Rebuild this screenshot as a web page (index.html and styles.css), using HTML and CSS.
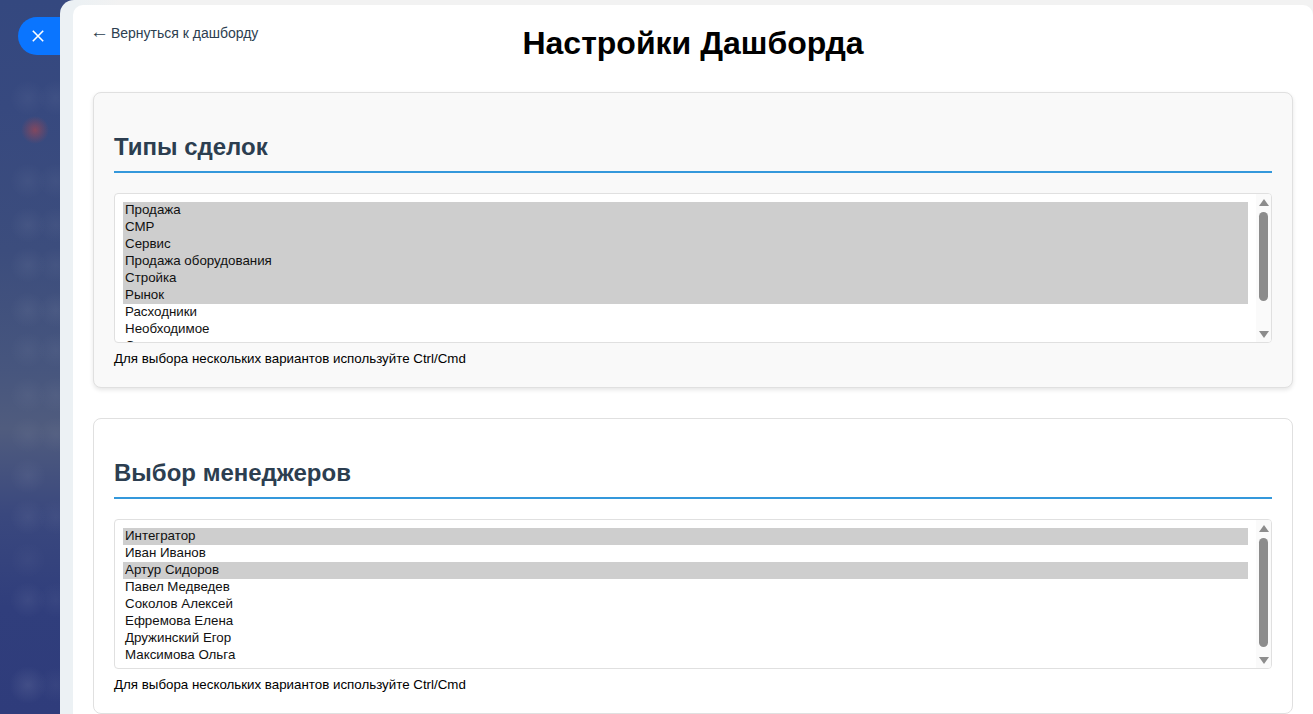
FILE: index.html
```html
<!DOCTYPE html>
<html lang="ru">
<head>
<meta charset="utf-8">
<title>Настройки Дашборда</title>
<link rel="stylesheet" href="styles.css">
</head>
<body>
<div class="app">
  <aside class="rail">
    <button class="close" aria-label="Закрыть">
      <svg width="14" height="14" viewBox="0 0 14 14"><path d="M1.8 1.8 12.2 12.2M12.2 1.8 1.8 12.2" stroke="#fff" stroke-width="1.6" fill="none"/></svg>
    </button>
  </aside>
  <div class="sheet">
    <main class="main">
      <header class="head">
        <a class="back" href="#"><span class="arrow">←</span> Вернуться к дашборду</a>
        <h1>Настройки Дашборда</h1>
      </header>
      <section class="card grey">
        <h2>Типы сделок</h2>
        <div class="listbox">
          <ul class="opts">
            <li class="sel">Продажа</li>
            <li class="sel">СМР</li>
            <li class="sel">Сервис</li>
            <li class="sel">Продажа оборудования</li>
            <li class="sel">Стройка</li>
            <li class="sel">Рынок</li>
            <li>Расходники</li>
            <li>Необходимое</li>
            <li>Согласование</li>
          </ul>
          <div class="bar"><i class="up"></i><b class="thumb t1"></b><i class="down"></i></div>
        </div>
        <p class="hint">Для выбора нескольких вариантов используйте Ctrl/Cmd</p>
      </section>
      <section class="card">
        <h2>Выбор менеджеров</h2>
        <div class="listbox">
          <ul class="opts">
            <li class="sel">Интегратор</li>
            <li>Иван Иванов</li>
            <li class="sel">Артур Сидоров</li>
            <li>Павел Медведев</li>
            <li>Соколов Алексей</li>
            <li>Ефремова Елена</li>
            <li>Дружинский Егор</li>
            <li>Максимова Ольга</li>
          </ul>
          <div class="bar"><i class="up"></i><b class="thumb t2"></b><i class="down"></i></div>
        </div>
        <p class="hint">Для выбора нескольких вариантов используйте Ctrl/Cmd</p>
      </section>
    </main>
  </div>
</div>
</body>
</html>
```
FILE: styles.css
```css
* { box-sizing: border-box; }
html, body { margin: 0; height: 100%; overflow: hidden; }
body { font-family: "Liberation Sans", Arial, sans-serif; color: #000; background: #3a4a80; }
.app { display: flex; height: 714px; }
.rail {
  width: 60px; flex: none; position: relative; padding: 17px 0 0 18px;
  background:
    radial-gradient(circle 14px at 35px 130px, rgba(190,70,70,.55), transparent),
    radial-gradient(circle 18px at 28px 98px, rgba(255,255,255,.045), transparent),
    radial-gradient(circle 18px at 56px 98px, rgba(255,255,255,.045), transparent),
    radial-gradient(circle 18px at 28px 181px, rgba(255,255,255,.045), transparent),
    radial-gradient(circle 18px at 56px 181px, rgba(255,255,255,.04), transparent),
    radial-gradient(circle 18px at 28px 225px, rgba(255,255,255,.05), transparent),
    radial-gradient(circle 18px at 56px 225px, rgba(255,255,255,.04), transparent),
    radial-gradient(circle 18px at 28px 265px, rgba(255,255,255,.05), transparent),
    radial-gradient(circle 18px at 56px 265px, rgba(255,255,255,.04), transparent),
    radial-gradient(circle 18px at 28px 310px, rgba(255,255,255,.05), transparent),
    radial-gradient(circle 18px at 56px 310px, rgba(255,255,255,.05), transparent),
    radial-gradient(circle 18px at 28px 350px, rgba(255,255,255,.04), transparent),
    radial-gradient(circle 18px at 56px 350px, rgba(255,255,255,.04), transparent),
    radial-gradient(circle 18px at 28px 395px, rgba(255,255,255,.04), transparent),
    radial-gradient(circle 18px at 56px 395px, rgba(255,255,255,.04), transparent),
    radial-gradient(circle 18px at 28px 435px, rgba(255,255,255,.04), transparent),
    radial-gradient(circle 18px at 56px 435px, rgba(255,255,255,.04), transparent),
    radial-gradient(circle 18px at 28px 476px, rgba(255,255,255,.05), transparent),
    radial-gradient(circle 18px at 28px 517px, rgba(255,255,255,.05), transparent),
    radial-gradient(circle 18px at 56px 517px, rgba(255,255,255,.04), transparent),
    radial-gradient(circle 18px at 28px 560px, rgba(255,255,255,.03), transparent),
    radial-gradient(circle 18px at 28px 600px, rgba(255,255,255,.06), transparent),
    radial-gradient(circle 18px at 56px 600px, rgba(255,255,255,.04), transparent),
    radial-gradient(circle 19px at 28px 685px, rgba(255,255,255,.09), transparent),
    radial-gradient(circle 18px at 56px 685px, rgba(255,255,255,.04), transparent),
    linear-gradient(180deg, #34487f 0, #37497f 15%, #3c4d7d 35%, #47567e 52%, #505c7e 60%, #3a487e 72%, #303e7c 85%, #2f3c7b 100%);
}
.close {
  display: flex; align-items: center; justify-content: center;
  width: 42px; height: 38px; padding: 0 2px 0 0; border: 0; background: #0a75ff;
  border-radius: 19px 0 0 19px;
}
.sheet {
  flex: 1; min-width: 0; border-top-left-radius: 14px; padding: 5px 0 0 13px;
  background: linear-gradient(90deg, #ecf1f4 0, #ecf1f4 16px, #f2f2f2 60px);
}
.main { height: 100%; background: #fff; border-radius: 10px 10px 0 0; padding: 20px 20px 0 20px; }
.head { position: relative; height: 67px; }
.back { position: absolute; left: 0; top: 0; font-size: 14px; line-height: 16px; color: #2c3e50; text-decoration: none; }
.arrow { margin-left: -3px; margin-right: -2px; font-size: 19px; line-height: 0; }
h1 { margin: 0; text-align: center; font-size: 32px; line-height: 37px; font-weight: 700; }
.card { border: 1px solid #e0e0e0; border-radius: 8px; background: #fff; padding: 20px; height: 296px; margin-bottom: 30px; }
.card.grey { background: #f9f9f9; box-shadow: 0 2px 4px rgba(0,0,0,.1); }
h2 { margin: 20px 0 20px; height: 40px; padding-bottom: 10px; border-bottom: 2px solid #3498db; font-size: 24px; line-height: 28px; font-weight: 700; color: #2c3e50; }
.listbox { display: flex; height: 150px; border: 1px solid #e0e0e0; border-radius: 4px; background: #fff; overflow: hidden; }
.opts { list-style: none; flex: 1; min-width: 0; margin: 0; padding: 8px 8px 0; overflow: hidden; font-size: 13.33px; }
.opts li { height: 17px; line-height: 15px; padding: 0 2px; white-space: nowrap; color: #111; }
.opts li.sel { background: #cecece; }
.bar { width: 15px; flex: none; display: flex; flex-direction: column; align-items: center; background: #fafafa; padding-top: 5px; }
.up, .down { display: block; width: 0; height: 0; border-left: 5px solid transparent; border-right: 5px solid transparent; }
.up { border-bottom: 7px solid #8c8c8c; }
.down { border-top: 7px solid #8c8c8c; margin-top: auto; margin-bottom: 4px; }
.thumb { display: block; width: 9px; margin-top: 6px; background: #8c8c8c; border-radius: 5px; }
.t1 { height: 89px; }
.t2 { height: 109px; }
.hint { margin: 8px 0 0; font-size: 13.33px; line-height: 16px; color: #000; }
```
